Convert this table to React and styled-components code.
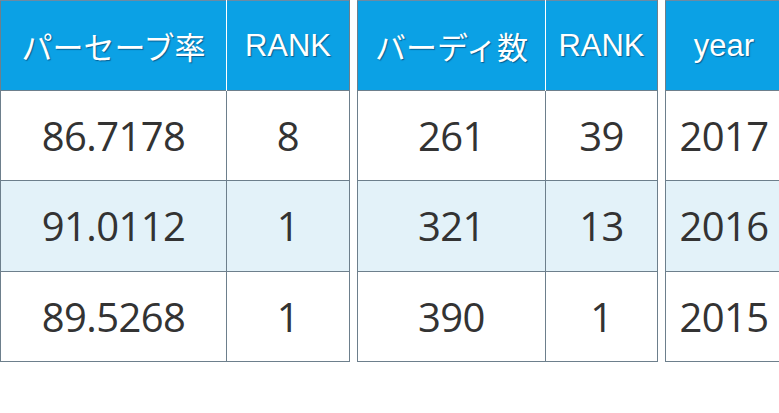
import React from "react";
import styled, { createGlobalStyle } from "styled-components";

const GlobalStyle = createGlobalStyle`
  html, body {
    margin: 0;
    padding: 0;
    background: #ffffff;
  }
`;

const Page = styled.div`
  display: flex;
  gap: 7px;
  width: 779px;
  height: 413px;
  overflow: hidden;
`;

const Table = styled.table`
  border-collapse: collapse;
  table-layout: fixed;
  flex: none;
  width: ${({ width }) => width}px;
  height: 362px;
`;

const Head = styled.th`
  background: #0ba1e5;
  color: #ffffff;
  font-family: "Liberation Sans", "Noto Sans CJK JP", sans-serif;
  font-weight: normal;
  font-size: 31px;
  text-shadow: 1px 1px 1px rgba(0, 40, 80, 0.55);
  height: 89px;
  padding: 0;
  width: ${({ width }) => width}px;
  border-top: 1px solid #6c8aa3;
  border-left: 1px solid #ffffff;
  border-right: 1px solid #ffffff;
  &:first-child {
    border-left: 1px solid #6d7f8c;
  }
  &:last-child {
    border-right: 1px solid #6d7f8c;
  }
`;

const Row = styled.tr`
  background: ${({ shaded }) => (shaded ? "#e3f2f9" : "#ffffff")};
`;

const Cell = styled.td`
  border: 1px solid #6d7f8c;
  height: 89px;
  padding: 0;
  text-align: center;
  font-family: "Open Sans", "Noto Sans", sans-serif;
  font-size: 40px;
  color: #333333;
  letter-spacing: -0.6px;
`;

const tables = [
  {
    width: 347,
    cols: [
      ["パーセーブ率", 225],
      ["RANK", 122],
    ],
    rows: [
      ["86.7178", "8"],
      ["91.0112", "1"],
      ["89.5268", "1"],
    ],
  },
  {
    width: 298,
    cols: [
      ["バーディ数", 187],
      ["RANK", 111],
    ],
    rows: [
      ["261", "39"],
      ["321", "13"],
      ["390", "1"],
    ],
  },
  {
    width: 116,
    cols: [["year", 116]],
    rows: [["2017"], ["2016"], ["2015"]],
  },
];

const App = () => {
  return (
    <>
      <GlobalStyle />
      <Page>
        {tables.map((t, i) => (
          <Table key={i} width={t.width}>
            <thead>
              <tr>
                {t.cols.map(([label, w]) => (
                  <Head key={label} width={w}>
                    {label}
                  </Head>
                ))}
              </tr>
            </thead>
            <tbody>
              {t.rows.map((r, j) => (
                <Row key={j} shaded={j === 1}>
                  {r.map((v, k) => (
                    <Cell key={k}>{v}</Cell>
                  ))}
                </Row>
              ))}
            </tbody>
          </Table>
        ))}
      </Page>
    </>
  );
};

export default App;
